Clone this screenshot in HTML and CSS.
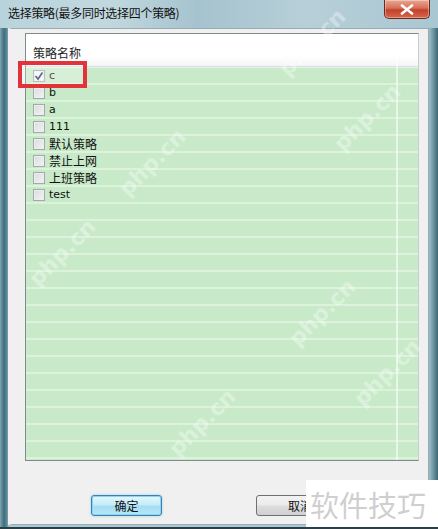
FILE: index.html
```html
<!DOCTYPE html>
<html>
<head>
<meta charset="utf-8">
<link rel="stylesheet" href="styles.css">
</head>
<body>
<div class="window">
  <div class="titlebar">
    <span class="title">选择策略(最多同时选择四个策略)</span>
    <div class="close">
      <svg width="14" height="11" viewBox="0 0 14 11"><path d="M2 1.5 L12 9.5 M12 1.5 L2 9.5" stroke="#fff" stroke-width="2.6" stroke-linecap="round"/></svg>
    </div>
  </div>
  <div class="client">
    <div class="list">
      <div class="header"><span class="hcell">策略名称</span></div>
      <div class="rows">
        <div class="row"><span class="cb checked"><svg width="10" height="10" viewBox="0 0 10 10"><path d="M1.5 5 L4 8 L8.5 1.5" fill="none" stroke="#2a3f6a" stroke-width="1.8"/></svg></span><span class="lbl latin">c</span></div>
        <div class="row"><span class="cb"></span><span class="lbl latin">b</span></div>
        <div class="row"><span class="cb"></span><span class="lbl latin">a</span></div>
        <div class="row"><span class="cb"></span><span class="lbl latin">111</span></div>
        <div class="row"><span class="cb"></span><span class="lbl">默认策略</span></div>
        <div class="row"><span class="cb"></span><span class="lbl">禁止上网</span></div>
        <div class="row"><span class="cb"></span><span class="lbl">上班策略</span></div>
        <div class="row"><span class="cb"></span><span class="lbl latin">test</span></div>
        <div class="row"></div><div class="row"></div><div class="row"></div><div class="row"></div>
        <div class="row"></div><div class="row"></div><div class="row"></div><div class="row"></div>
        <div class="row"></div><div class="row"></div><div class="row"></div><div class="row"></div>
        <div class="row"></div><div class="row"></div><div class="row"></div><div class="row"></div>
        <div class="row"></div><div class="row"></div><div class="row"></div>
      </div>
      <div class="vline"></div>
    </div>
    <div class="buttons">
      <div class="btn ok">确定</div>
      <div class="btn cancel">取消</div>
    </div>
  </div>
  <div class="redbox"></div>
  <div class="wm w1">php.cn</div>
  <div class="wm w2">php.cn</div>
  <div class="wm w3">php.cn</div>
  <div class="wm w4">php.cn</div>
  <div class="wm w5">php.cn</div>
  <div class="wm w6">php.cn</div>
  <div class="wm w7">php.cn</div>
  <div class="brand">软件技巧</div>
</div>
</body>
</html>
```
FILE: styles.css
```css
* { box-sizing: border-box; }
html, body { margin: 0; padding: 0; }
body { width: 438px; height: 529px; overflow: hidden; background: #fff; }

.window {
  position: relative;
  width: 438px;
  height: 529px;
  overflow: hidden;
  display: flex;
  flex-direction: column;
  padding: 0 9px 2px 8px;
  background: linear-gradient(90deg, #7ea5b3 0px, #3f6e7c 4px, #5d8b98 7px, #a9c8d3 9px, #a9c8d3 calc(100% - 10px), #6f98a5 calc(100% - 5px), #3e6573 100%);
  border-bottom: 2px solid #2c3e46;
  font-family: "Noto Sans CJK SC", "Liberation Sans", sans-serif;
}

.titlebar {
  height: 28px;
  flex: none;
  position: relative;
  display: flex;
  align-items: flex-start;
  margin: 0 -9px 0 -8px;
  padding: 5px 8px 0;
  background: linear-gradient(90deg, #b9d3dc 0%, #c2d8df 25%, #a5c3ce 45%, #b7cfd8 70%, #a9c7d2 100%);
}
.title {
  font-size: 12px;
  line-height: 16px;
  color: #111;
  letter-spacing: -0.3px;
}
.close {
  position: absolute;
  right: 8px;
  top: 0;
  width: 46px;
  height: 19px;
  border: 1px solid #6a2a20;
  border-top: none;
  border-radius: 0 0 5px 5px;
  background: linear-gradient(180deg, #e9a792 0%, #d8705a 45%, #c2412c 55%, #d8664a 100%);
  display: flex;
  align-items: center;
  justify-content: center;
  box-shadow: inset 0 0 0 1px rgba(255,255,255,0.35);
}

.client {
  flex: 1;
  display: flex;
  flex-direction: column;
  background: #f0f0f0;
  border: 1px solid #98abb3;
  border-left: 4px solid #f4eef2;
  padding: 4px 9px 0 13px;
}

.list {
  position: relative;
  height: 428px;
  flex: none;
  border: 1px solid #7f8a8f;
  border-right-color: #c8cdd0;
  background: #c9ebca;
  display: flex;
  flex-direction: column;
  overflow: hidden;
}
.header {
  height: 33px;
  flex: none;
  display: flex;
  align-items: flex-end;
  padding: 0 0 5px 7px;
  background: linear-gradient(180deg, #ffffff 0%, #ffffff 70%, #f3f5f6 100%);
  border-bottom: 1px solid #d8dee2;
}
.hcell {
  font-size: 12px;
  line-height: 16px;
  color: #222;
}
.rows {
  flex: 1;
  display: flex;
  flex-direction: column;
  border-top: 1px solid #e4f4e4;
}
.row {
  height: 17px;
  flex: none;
  display: flex;
  align-items: center;
  padding-left: 7px;
  border-bottom: 2px solid #dcf2dc;
  background: #c8eac9;
}
.cb {
  width: 12px;
  height: 12px;
  flex: none;
  border: 1px solid #a5a9ab;
  background: linear-gradient(135deg, #d9dcde 0%, #f2f3f4 100%);
  box-shadow: inset 0 0 0 1px #eceeef;
  display: flex;
  align-items: center;
  justify-content: center;
}
.cb.checked { background: #f4f6f8; }
.lbl {
  margin-left: 4px;
  font-size: 12px;
  line-height: 14px;
  height: 14px;
  overflow: visible;
  color: #111;
}
.lbl.latin {
  font-family: "DejaVu Sans", "Liberation Sans", sans-serif;
  font-size: 11px;
}
.vline {
  position: absolute;
  top: 0;
  bottom: 0;
  left: 370px;
  width: 2px;
  background: rgba(255,255,255,0.55);
}

.buttons {
  flex: 1;
  display: flex;
  align-items: flex-start;
  padding: 34px 0 0 66px;
  gap: 94px;
}
.btn {
  width: 71px;
  height: 21px;
  border-radius: 3px;
  font-size: 12px;
  line-height: 19px;
  text-align: center;
  color: #111;
}
.ok {
  border: 1px solid #3c7fb1;
  background: linear-gradient(180deg, #e5f7fd 0%, #c5ecf9 45%, #a6ddf2 55%, #b7e6f7 100%);
  box-shadow: 0 0 0 1px #8fd3f0 inset, 0 0 3px #9ad6ef;
}
.cancel {
  border: 1px solid #707070;
  background: linear-gradient(180deg, #f2f2f2 0%, #ebebeb 45%, #dddddd 55%, #cfcfcf 100%);
  text-align: right;
  padding-right: 14px;
}

.redbox {
  position: absolute;
  left: 18px;
  top: 61px;
  width: 69px;
  height: 27px;
  border: 4px solid #e2333a;
  background: rgba(255,255,255,0.25);
}

.wm {
  position: absolute;
  font-family: "DejaVu Sans", sans-serif;
  font-size: 22px;
  font-weight: bold;
  color: rgba(255,255,255,0.35);
  transform: rotate(-45deg);
  pointer-events: none;
}
.w1 { left: 270px; top: 30px; }
.w2 { left: 110px; top: 150px; }
.w3 { left: 325px; top: 105px; }
.w4 { left: 20px; top: 240px; }
.w5 { left: 280px; top: 300px; }
.w6 { left: 160px; top: 410px; }
.w7 { left: 345px; top: 360px; }

.brand {
  position: absolute;
  left: 306px;
  top: 480px;
  width: 132px;
  height: 49px;
  background: #fff;
  color: #cfcfcf;
  font-size: 29px;
  line-height: 49px;
  padding-left: 4px;
  white-space: nowrap;
}
```
